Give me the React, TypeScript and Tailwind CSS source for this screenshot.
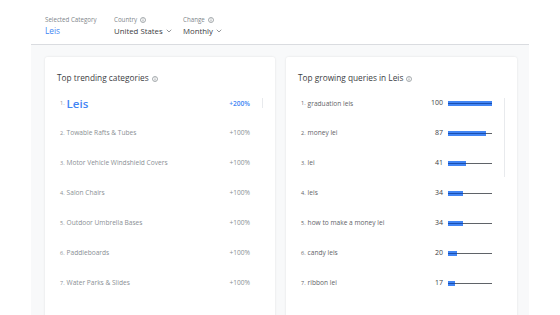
import { ChevronDown } from 'lucide-react';

const categories = [
  { name: 'Leis', change: '+200%', active: true },
  { name: 'Towable Rafts & Tubes', change: '+100%' },
  { name: 'Motor Vehicle Windshield Covers', change: '+100%' },
  { name: 'Salon Chairs', change: '+100%' },
  { name: 'Outdoor Umbrella Bases', change: '+100%' },
  { name: 'Paddleboards', change: '+100%' },
  { name: 'Water Parks & Slides', change: '+100%' },
];

const queries = [
  { name: 'graduation leis', value: 100 },
  { name: 'money lei', value: 87 },
  { name: 'lei', value: 41 },
  { name: 'leis', value: 34 },
  { name: 'how to make a money lei', value: 34 },
  { name: 'candy leis', value: 20 },
  { name: 'ribbon lei', value: 17 },
];

function InfoIcon() {
  return (
    <svg width="6" height="6" viewBox="0 0 12 12" className="inline-block ml-[3px] align-middle">
      <circle cx="6" cy="6" r="5" fill="none" stroke="#80868b" strokeWidth="1.4" />
      <rect x="5.3" y="5" width="1.4" height="4" fill="#80868b" />
      <rect x="5.3" y="2.8" width="1.4" height="1.4" fill="#80868b" />
    </svg>
  );
}

export default function App() {
  return (
    <div className="w-[560px] h-[315px] bg-white overflow-hidden px-[31px] font-['Open_Sans',sans-serif]">
      <div className="w-[498px] h-full flex flex-col">
        {/* Header filters */}
        <div className="h-[45px] shrink-0 border-b border-[#dadce0] pl-[14px] pt-[16px] flex">
          <div className="w-[69px] shrink-0">
            <div className="text-[6.2px] leading-[8px] text-[#80868b] whitespace-nowrap">Selected Category</div>
            <div className="mt-[1px] text-[8.3px] leading-[12px] text-[#4285f4]">Leis</div>
          </div>
          <div className="w-[69px] shrink-0">
            <div className="text-[6.2px] leading-[8px] text-[#80868b] whitespace-nowrap">
              Country
              <InfoIcon />
            </div>
            <div className="mt-[1px] text-[7.8px] leading-[12px] text-[#3c4043] flex items-center whitespace-nowrap">
              United States
              <ChevronDown size={8} strokeWidth={2} className="ml-[2px] shrink-0 text-[#5f6368]" />
            </div>
          </div>
          <div className="shrink-0">
            <div className="text-[6.2px] leading-[8px] text-[#80868b] whitespace-nowrap">
              Change
              <InfoIcon />
            </div>
            <div className="mt-[1px] text-[7.8px] leading-[12px] text-[#3c4043] flex items-center whitespace-nowrap">
              Monthly
              <ChevronDown size={8} strokeWidth={2} className="ml-[2px] shrink-0 text-[#5f6368]" />
            </div>
          </div>
        </div>

        {/* Cards */}
        <div className="flex-1 bg-[#f8f9fa] pl-[14px] pt-[12px] flex gap-[11px]">
          <div className="w-[230px] h-[300px] bg-white rounded-[2px] shadow-[0_0_2px_rgba(60,64,67,0.15)] pl-[12px] pt-[15px]">
            <div className="text-[8.3px] leading-[12px] text-[#3c4043]">
              Top trending categories
              <InfoIcon />
            </div>
            <div className="flex mt-[5px] pl-[3px]">
              <div className="w-[190px]">
                {categories.map((c, i) => (
                  <div
                    key={c.name}
                    className={`flex items-center ${i === 0 ? 'h-[29px]' : 'h-[30px]'}`}
                  >
                    <span className="text-[5.5px] text-[#8a8f94] mr-[2px]">{i + 1}.</span>
                    {c.active ? (
                      <span className="text-[11.5px] font-semibold text-[#4285f4]">{c.name}</span>
                    ) : (
                      <span className="text-[6.6px] text-[#8a8f94]">{c.name}</span>
                    )}
                    <span
                      className={`ml-auto text-[6.6px] ${c.active ? 'text-[#4285f4] font-semibold' : 'text-[#8a8f94]'}`}
                    >
                      {c.change}
                    </span>
                  </div>
                ))}
              </div>
              <div className="ml-[12px] mt-[9px] w-px h-[10px] bg-[#e8eaed]" />
            </div>
          </div>

          <div className="w-[231px] h-[300px] bg-white rounded-[2px] shadow-[0_0_2px_rgba(60,64,67,0.15)] pl-[12px] pt-[15px]">
            <div className="text-[8.3px] leading-[12px] text-[#3c4043]">
              Top growing queries in Leis
              <InfoIcon />
            </div>
            <div className="flex mt-[5px] pl-[3px]">
              <div className="w-[191px]">
                {queries.map((q, i) => (
                  <div
                    key={q.name + i}
                    className={`flex items-center ${i === 0 ? 'h-[29px]' : 'h-[30px]'}`}
                  >
                    <span className="text-[5.5px] text-[#5f6368] mr-[2px]">{i + 1}.</span>
                    <span className="text-[6.6px] text-[#5f6368]">{q.name}</span>
                    <span className="ml-auto text-[7px] text-[#3c4043]">{q.value}</span>
                    <div className="relative ml-[5px] w-[44px] h-[5px]">
                      <div className="absolute left-0 right-0 top-[2px] h-px bg-[#5f6368]" />
                      <div
                        className="absolute left-0 top-0 h-[5px] bg-[#4285f4]"
                        style={{ width: `${Math.max(6, (q.value / 100) * 44)}px` }}
                      >
                        <div className="absolute left-0 right-0 top-[2px] h-px bg-[#1a4fb0]" />
                      </div>
                    </div>
                  </div>
                ))}
              </div>
              <div className="ml-[12px] mt-[9px] w-px h-[79px] bg-[#e8eaed]" />
            </div>
          </div>
        </div>
      </div>
    </div>
  );
}
